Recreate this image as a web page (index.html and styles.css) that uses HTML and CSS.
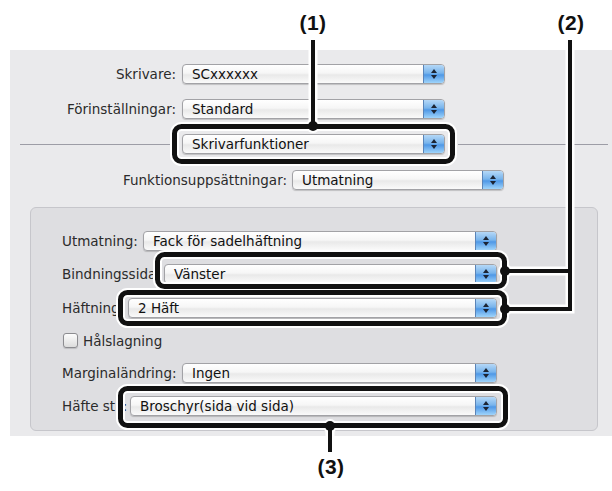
FILE: index.html
```html
<!DOCTYPE html>
<html lang="sv">
  <head>
    <meta charset="UTF-8" />
    <title>Skrivarfunktioner</title>
    <link rel="stylesheet" href="styles.css">
  </head>
  <body>
    <div class="sheet">
      <div class="dialog">
        <div class="row top">
          <span class="lbl lbl-top">Skrivare:</span>
          <div class="popup w-top"><span class="val">SCxxxxxx</span><span class="arrows"></span></div>
        </div>
        <div class="row top">
          <span class="lbl lbl-top">Förinställningar:</span>
          <div class="popup w-top"><span class="val">Standard</span><span class="arrows"></span></div>
        </div>
        <div class="row sep-row">
          <span class="rule rule-left"></span>
          <div class="popup w-top"><span class="val">Skrivarfunktioner</span><span class="arrows"></span></div>
          <span class="rule rule-right"></span>
        </div>
        <div class="row set-row">
          <span class="lbl lbl-set">Funktionsuppsättningar:</span>
          <div class="popup w-set"><span class="val">Utmatning</span><span class="arrows"></span></div>
        </div>

        <div class="group">
          <div class="row">
            <span class="lbl" style="width: 81px">Utmatning:</span>
            <div class="popup" style="width: 354px"><span class="val">Fack för sadelhäftning</span><span class="arrows"></span></div>
          </div>
          <div class="row">
            <span class="lbl" style="width: 102px">Bindningssida:</span>
            <div class="popup" style="width: 333px"><span class="val">Vänster</span><span class="arrows"></span></div>
          </div>
          <div class="row">
            <span class="lbl" style="width: 66px">Häftning:</span>
            <div class="popup" style="width: 369px"><span class="val">2 Häft</span><span class="arrows"></span></div>
          </div>
          <div class="row check-row">
            <span class="checkbox"></span>
            <span class="check-text">Hålslagning</span>
          </div>
          <div class="row">
            <span class="lbl" style="width: 120px">Marginaländring:</span>
            <div class="popup" style="width: 315px"><span class="val">Ingen</span><span class="arrows"></span></div>
          </div>
          <div class="row">
            <span class="lbl" style="width: 68px">Häfte stil:</span>
            <div class="popup" style="width: 367px"><span class="val">Broschyr(sida vid sida)</span><span class="arrows"></span></div>
          </div>
        </div>
      </div>

      <!-- callouts -->
      <svg class="callouts" width="612" height="491" viewBox="0 0 612 491">
        <g class="halo">
          <rect x="174.5" y="126.5" width="278" height="35" rx="7" />
          <rect x="157.5" y="254.5" width="347" height="32" rx="7" />
          <rect x="120.5" y="292.5" width="384" height="31" rx="7" />
          <rect x="120.5" y="388.5" width="385" height="37" rx="7" />
          <path d="M313 40 V126 M505 271 H570 M505 309 H570 V40 M330 426 V452" />
          <circle cx="313" cy="126" r="5" />
          <circle cx="505" cy="271" r="5" />
          <circle cx="505" cy="309" r="5" />
          <circle cx="330" cy="426" r="5" />
        </g>
        <g class="ink">
          <rect x="174.5" y="126.5" width="278" height="35" rx="7" />
          <rect x="157.5" y="254.5" width="347" height="32" rx="7" />
          <rect x="120.5" y="292.5" width="384" height="31" rx="7" />
          <rect x="120.5" y="388.5" width="385" height="37" rx="7" />
          <path class="lead" d="M313 40 V126 M505 271 H570 M505 309 H570 V40 M330 426 V452" />
          <circle cx="313" cy="126" r="5" />
          <circle cx="505" cy="271" r="5" />
          <circle cx="505" cy="309" r="5" />
          <circle cx="330" cy="426" r="5" />
        </g>
      </svg>
      <span class="tag tag-1">(1)</span>
      <span class="tag tag-2">(2)</span>
      <span class="tag tag-3">(3)</span>
    </div>
  </body>
</html>
```

FILE: styles.css
```css
* {
  margin: 0;
  padding: 0;
  box-sizing: border-box;
}
body {
  background-color: #fff;
  font-family: "DejaVu Sans", sans-serif;
  font-size: 13.5px;
  color: #2b2b2b;
}
.sheet {
  position: relative;
  width: 612px;
  height: 491px;
  padding-top: 50px;
}
.dialog {
  margin-left: 10px;
  width: 602px;
  height: 386px;
  padding-top: 13px;
  background-color: #eaeaec;
}
.row {
  display: flex;
  align-items: center;
  height: 21px;
}
.row.top {
  margin-bottom: 14px;
}
.lbl {
  flex: none;
  white-space: nowrap;
  overflow: hidden;
}
.lbl-top {
  width: 166px;
  text-align: right;
  margin-right: 6px;
}
.sep-row {
  margin-bottom: 15px;
}
.rule {
  height: 1px;
  margin-top: 2px;
  background-color: #9d9da6;
}
.rule-left {
  width: 152px;
  margin-left: 10px;
  margin-right: 10px;
}
.rule-right {
  width: 150px;
  margin-left: 13px;
}
.set-row .lbl-set {
  width: 277px;
  text-align: right;
  margin-right: 5px;
}
.w-top {
  width: 263px;
}
.w-set {
  width: 212px;
}

/* aqua popup */
.popup {
  flex: none;
  display: flex;
  height: 20px;
  border: 1px solid #a2a2a6;
  border-radius: 4px;
  overflow: hidden;
  background: linear-gradient(#ffffff 0%, #f6f6f6 45%, #e9e9e9 55%, #fafafa 100%);
  box-shadow: 0 1px 1px rgba(0, 0, 0, 0.18);
  color: #111;
}
.popup .val {
  flex: 1;
  padding-left: 9px;
  line-height: 18px;
  white-space: nowrap;
}
.arrows {
  position: relative;
  flex: none;
  width: 21px;
  border-left: 1px solid #5a84b8;
  background: linear-gradient(#b5d8f7 0%, #78b4ec 45%, #4f98e6 55%, #9fd4fb 100%);
}
.arrows::before,
.arrows::after {
  content: "";
  position: absolute;
  left: 7px;
  border-left: 3px solid transparent;
  border-right: 3px solid transparent;
}
.arrows::before {
  top: 4px;
  border-bottom: 4px solid #1c2433;
}
.arrows::after {
  top: 10px;
  border-top: 4px solid #1c2433;
}

/* group box */
.group {
  margin: 17px 0 0 20px;
  width: 568px;
  height: 224px;
  padding: 22px 0 0 31px;
  background-color: #dedee1;
  border: 1px solid #c6c6cb;
  border-radius: 6px;
}
.group .row {
  margin-bottom: 12px;
}
.group .row:nth-child(2) {
  margin-bottom: 13px;
}
.group .row.check-row {
  margin-bottom: 11px;
}
.checkbox {
  width: 15px;
  height: 15px;
  margin: 0 5px 0 1px;
  border: 1px solid #8c8c90;
  border-radius: 3px;
  background: linear-gradient(#fdfdfd, #dcdcdc);
  box-shadow: 0 1px 1px rgba(0, 0, 0, 0.15);
}

/* callouts */
.callouts {
  position: absolute;
  top: 0;
  left: 0;
  pointer-events: none;
}
.callouts rect,
.callouts path {
  fill: none;
}
.halo rect,
.halo path {
  stroke: #fff;
  stroke-width: 9;
}
.halo circle {
  fill: #fff;
  stroke: #fff;
  stroke-width: 4;
}
.ink rect {
  stroke: #111;
  stroke-width: 5;
}
.ink .lead {
  stroke: #111;
  stroke-width: 4;
}
.ink circle {
  fill: #111;
}
.tag {
  position: absolute;
  width: 44px;
  margin-left: -22px;
  text-align: center;
  font-family: "Liberation Sans", Arial, sans-serif;
  font-weight: bold;
  font-size: 21px;
  letter-spacing: 0.5px;
  color: #111;
}
.tag-1 {
  left: 313px;
  top: 11px;
}
.tag-2 {
  left: 571px;
  top: 11px;
}
.tag-3 {
  left: 331px;
  top: 455px;
}
```
